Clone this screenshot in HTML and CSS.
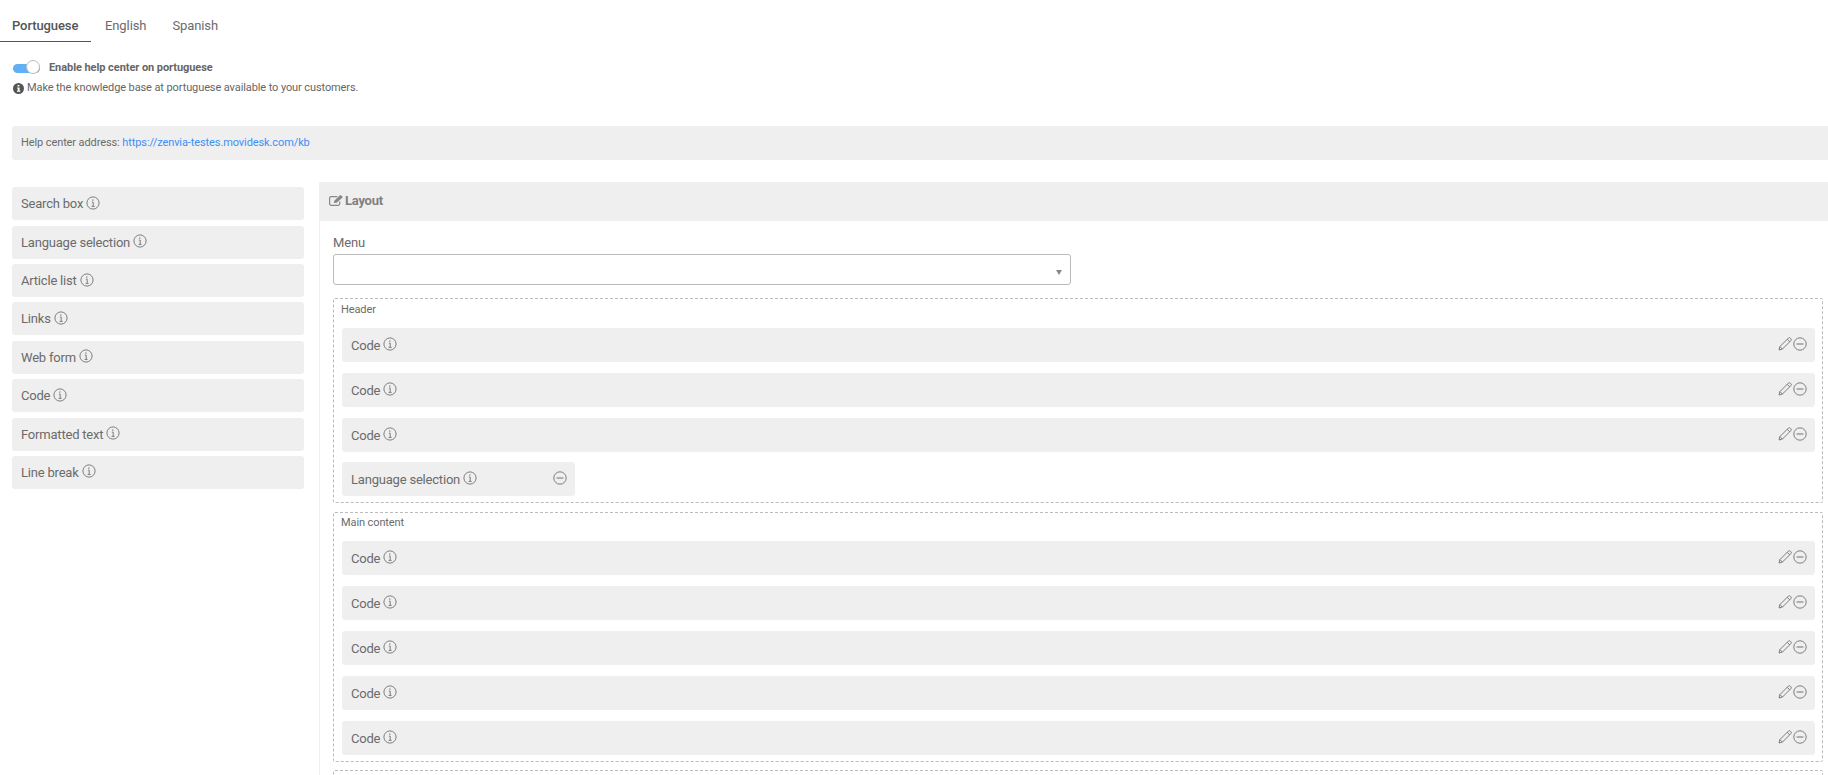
FILE: index.html
```html
<!DOCTYPE html>
<html lang="en">
<head>
<meta charset="utf-8">
<title>Help center</title>
<link rel="stylesheet" href="styles.css">
</head>
<body>
<svg class="defs" width="0" height="0" aria-hidden="true">
  <symbol id="i-info" viewBox="0 0 14 14"><circle cx="7" cy="7" r="6.1" fill="none" stroke="currentColor" stroke-width="0.9"/><path d="M6 4.1h1.5M7 3.2v.1M5.9 6.1H7.2V10.3M5.6 10.4H8.6" fill="none" stroke="currentColor" stroke-width="0.9"/></symbol>
  <symbol id="i-minus" viewBox="0 0 14 14"><circle cx="7" cy="7" r="6.2" fill="none" stroke="currentColor" stroke-width="0.9"/><path d="M3.6 7h6.8" fill="none" stroke="currentColor" stroke-width="1"/></symbol>
  <symbol id="i-pencil" viewBox="0 0 14 14"><path d="M1 13l.9-3.4L10.4 1.1a1.3 1.3 0 0 1 1.8 0l.7.7a1.3 1.3 0 0 1 0 1.8L4.4 12.1zM1.9 9.6l2.5 2.5M9.2 2.3l2.5 2.5" fill="none" stroke="currentColor" stroke-width="0.9" stroke-linejoin="round"/></symbol>
</svg>
<nav class="tabs">
  <a class="tab tab-active">Portuguese</a>
  <a class="tab">English</a>
  <a class="tab">Spanish</a>
</nav>
<section class="enable">
  <div class="toggle-row">
    <span class="toggle"><span class="toggle-knob"></span></span>
    <strong class="toggle-label">Enable help center on portuguese</strong>
  </div>
  <p class="hint">
    <svg class="hint-icon" viewBox="0 0 12 12"><circle cx="6" cy="6" r="6" fill="#555"/><path d="M5 2.2h2v1.7H5zM4.5 4.9h2.7v3.6h.8v1.1H4.300V8.500h.9V6h-.7z" fill="#fff"/></svg>
    Make the knowledge base at portuguese available to your customers.
  </p>
</section>
<div class="address">Help center address: <a class="address-link">https://zenvia-testes.movidesk.com/kb</a></div>
<main class="columns">
  <aside class="palette">
    <div class="chip">Search box <svg class="info"><use href="#i-info"/></svg></div>
    <div class="chip">Language selection <svg class="info"><use href="#i-info"/></svg></div>
    <div class="chip">Article list <svg class="info"><use href="#i-info"/></svg></div>
    <div class="chip">Links <svg class="info"><use href="#i-info"/></svg></div>
    <div class="chip">Web form <svg class="info"><use href="#i-info"/></svg></div>
    <div class="chip">Code <svg class="info"><use href="#i-info"/></svg></div>
    <div class="chip">Formatted text <svg class="info"><use href="#i-info"/></svg></div>
    <div class="chip">Line break <svg class="info"><use href="#i-info"/></svg></div>
  </aside>
  <section class="panel">
    <header class="panel-head">
      <svg class="edit-icon" viewBox="0 0 14 11"><path d="M10.700 6.400v2.400a1.500 1.500 0 0 1-1.500 1.500H2.100A1.500 1.500 0 0 1 .6 8.800V3.100a1.500 1.500 0 0 1 1.500-1.500h6.200" fill="none" stroke="#888" stroke-width="1.200"/><path d="M4.800 8.100l.5-2.400L10.900.3a.8.8 0 0 1 1.100 0l1.300 1.300a.8.800 0 0 1 0 1.100L7.700 7.700z" fill="#888"/></svg>
      <span>Layout</span>
    </header>
    <div class="panel-body">
      <label class="field-label">Menu</label>
      <div class="select"><span class="select-arrow"></span></div>

      <fieldset class="zone">
        <div class="zone-title">Header</div>
        <div class="row"><span class="row-name">Code <svg class="info"><use href="#i-info"/></svg></span><span class="row-tools"><svg class="tool"><use href="#i-pencil"/></svg><svg class="tool"><use href="#i-minus"/></svg></span></div>
        <div class="row"><span class="row-name">Code <svg class="info"><use href="#i-info"/></svg></span><span class="row-tools"><svg class="tool"><use href="#i-pencil"/></svg><svg class="tool"><use href="#i-minus"/></svg></span></div>
        <div class="row"><span class="row-name">Code <svg class="info"><use href="#i-info"/></svg></span><span class="row-tools"><svg class="tool"><use href="#i-pencil"/></svg><svg class="tool"><use href="#i-minus"/></svg></span></div>
        <div class="row row-short"><span class="row-name">Language selection <svg class="info"><use href="#i-info"/></svg></span><span class="row-tools"><svg class="tool"><use href="#i-minus"/></svg></span></div>
      </fieldset>

      <fieldset class="zone zone-main">
        <div class="zone-title">Main content</div>
        <div class="row"><span class="row-name">Code <svg class="info"><use href="#i-info"/></svg></span><span class="row-tools"><svg class="tool"><use href="#i-pencil"/></svg><svg class="tool"><use href="#i-minus"/></svg></span></div>
        <div class="row"><span class="row-name">Code <svg class="info"><use href="#i-info"/></svg></span><span class="row-tools"><svg class="tool"><use href="#i-pencil"/></svg><svg class="tool"><use href="#i-minus"/></svg></span></div>
        <div class="row"><span class="row-name">Code <svg class="info"><use href="#i-info"/></svg></span><span class="row-tools"><svg class="tool"><use href="#i-pencil"/></svg><svg class="tool"><use href="#i-minus"/></svg></span></div>
        <div class="row"><span class="row-name">Code <svg class="info"><use href="#i-info"/></svg></span><span class="row-tools"><svg class="tool"><use href="#i-pencil"/></svg><svg class="tool"><use href="#i-minus"/></svg></span></div>
        <div class="row"><span class="row-name">Code <svg class="info"><use href="#i-info"/></svg></span><span class="row-tools"><svg class="tool"><use href="#i-pencil"/></svg><svg class="tool"><use href="#i-minus"/></svg></span></div>
      </fieldset>

      <fieldset class="zone zone-empty"></fieldset>
    </div>
  </section>
</main>
</body>
</html>
```
FILE: styles.css
```css
* { box-sizing: border-box; }
html, body { margin: 0; height: 775px; overflow: hidden; background: #fff; }
body { font-family: Roboto, "Liberation Sans", sans-serif; font-size: 13px; letter-spacing: -0.1px; color: #6b6b6b; width: 1828px; }
.defs { display: block; height: 0; }

.tabs { display: flex; height: 42px; width: 300px; }
.tab { height: 42px; padding: 17px 12px 0; margin-right: 2px; line-height: 17px; border-bottom: 1px solid transparent; }
.tab-active { font-weight: 500; color: #555; border-bottom: 1px solid #555; width: 91px; }

.enable { padding: 18px 0 0 13px; height: 84px; }
.toggle-row { display: flex; align-items: center; height: 16px; }
.toggle { position: relative; display: block; width: 27px; height: 9px; border-radius: 5px; background: #5fb0f5; margin-right: 9px; }
.toggle-knob { position: absolute; right: 0; top: -3.5px; width: 14px; height: 14px; border-radius: 50%; background: #fff; border: 1px solid #bbb; }
.toggle-label { font-size: 11px; font-weight: 700; color: #666; letter-spacing: -0.07px; margin-top: -1px; }
.hint { margin: 4px 0 0; font-size: 11px; line-height: 16px; display: flex; align-items: center; gap: 3px; color: #666; }
.hint-icon { width: 11px; height: 11px; flex: none; }

.address { margin-left: 12px; height: 34px; line-height: 34px; padding-left: 9px; background: #efefef; border-radius: 3px 0 0 3px; font-size: 11px; }
.address-link { color: #3d8ef5; }

.columns { display: flex; align-items: flex-start; height: 593px; overflow: hidden; margin-top: 22px; padding-left: 12px; }
.palette { width: 292px; margin-right: 15px; padding-top: 5.3px; flex: none; display: flex; flex-direction: column; gap: 5.38px; }
.chip { height: 33px; background: #efefef; border-radius: 3px; padding-left: 9px; display: flex; align-items: center; gap: 3px; white-space: nowrap; letter-spacing: -0.2px; }

.info { width: 14px; height: 14px; color: #707070; margin-top: -2px; flex: none; }

.panel { flex: 1; border-left: 1px solid #efefef; }
.panel-head { height: 39px; margin-left: -1px; background: #efefef; border-radius: 3px 0 0 0; display: flex; align-items: center; padding-left: 10px; gap: 2px; color: #808080; font-weight: 700; letter-spacing: -0.25px; padding-bottom: 2px; }
.edit-icon { width: 14px; height: 11px; }
.panel-body { padding: 13px 5px 0 13px; }
.field-label { display: block; line-height: 17px; height: 20px; }
.select { position: relative; width: 738px; height: 31px; border: 1px solid #bbb; border-radius: 3px; }
.select-arrow { position: absolute; right: 8px; top: 15px; border-style: solid; border-color: #888 transparent transparent; border-width: 5px 3px 0; }

.zone { margin: 13px 0 0; padding: 0 7px 6px 8px; border: 1px dashed #bbb; border-radius: 2px; }
.zone-main { margin-top: 9px; }
.zone-title { font-size: 11px; line-height: 13px; padding-top: 4px; height: 29px; margin-left: -1px; }
.zone-main .zone-title { padding-top: 3px; height: 28px; }
.row { height: 34px; background: #efefef; border-radius: 3px; display: flex; align-items: center; justify-content: space-between; padding: 0 8px 0 9px; margin-bottom: 11px; }
.row:last-child { margin-bottom: 0; }
.row-short { width: 233px; margin-top: -1px; }
.row-name { display: flex; align-items: center; gap: 3px; white-space: nowrap; letter-spacing: -0.2px; }
.row-tools { display: flex; gap: 1px; align-items: center; margin-top: -3px; }
.tool { width: 14px; height: 14px; color: #707070; }
.zone-empty { height: 60px; margin-top: 8px; }
```
